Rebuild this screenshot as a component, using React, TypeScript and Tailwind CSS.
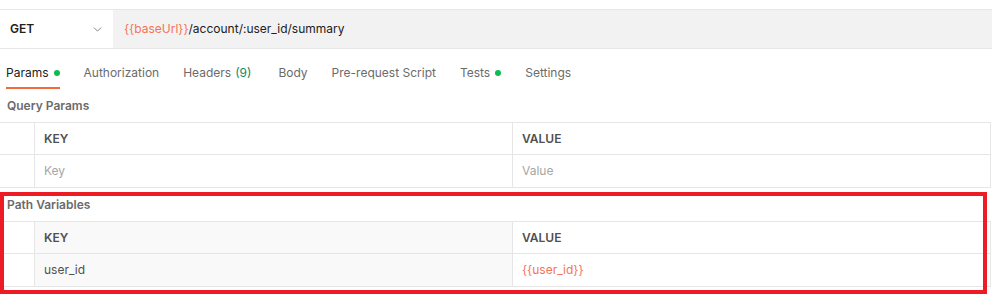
import { ChevronDown } from "lucide-react";

const tabs = [
  { label: "Params", dot: true, active: true },
  { label: "Authorization" },
  { label: "Headers", count: "(9)" },
  { label: "Body" },
  { label: "Pre-request Script" },
  { label: "Tests", dot: true },
  { label: "Settings" },
];

type Row = { key: string; value: string; placeholder?: boolean; variable?: boolean };

const ParamTable = ({ title, row, highlight }: { title: string; row: Row; highlight?: boolean }) => {
  const keyBg = highlight ? "bg-[#f9f9f9]" : "bg-white";
  return (
    <div>
      <div className="h-[33px] flex items-center pl-[7px] text-[12px] font-semibold text-[#6b6b6b]">
        {title}
      </div>
      <div className="border-t border-[#e6e6e6] w-[991px]">
        {/* header */}
        <div className="flex h-[32px] border-b border-[#e6e6e6]">
          <div className="w-[35px] border-r border-[#e6e6e6]" />
          <div className={`w-[478px] border-r border-[#e6e6e6] flex items-center pl-[9px] text-[12px] font-semibold text-[#505050] ${keyBg}`}>
            KEY
          </div>
          <div className="w-[478px] border-r border-[#e6e6e6] flex items-center pl-[9px] text-[12px] font-semibold text-[#505050]">
            VALUE
          </div>
        </div>
        {/* row */}
        <div className="flex h-[33px] border-b border-[#e6e6e6]">
          <div className="w-[35px] border-r border-[#e6e6e6]" />
          <div
            className={`w-[478px] border-r border-[#e6e6e6] flex items-center pl-[9px] text-[12px] ${keyBg} ${
              row.placeholder ? "text-[#a6a6a6]" : "text-[#505050]"
            }`}
          >
            {row.key}
          </div>
          <div
            className={`w-[478px] border-r border-[#e6e6e6] flex items-center pl-[9px] text-[12px] ${
              row.placeholder ? "text-[#a6a6a6]" : row.variable ? "text-[#f3735b]" : "text-[#505050]"
            }`}
          >
            {row.value}
          </div>
        </div>
      </div>
    </div>
  );
};

export default function App() {
  return (
    <div className="relative w-[992px] h-[302px] bg-white overflow-hidden font-['Inter',sans-serif]">
      {/* Request bar */}
      <div className="pt-[9px]">
        <div className="flex h-[40px] border-t border-b border-[#e6e6e6]">
          <div className="w-[113px] bg-white flex items-center justify-between pl-[10px] pr-[9px]">
            <span className="text-[12px] font-semibold text-[#212121]">GET</span>
            <ChevronDown className="w-[13px] h-[13px] text-[#6b6b6b]" strokeWidth={1.5} />
          </div>
          <div className="flex-1 bg-[#f2f2f2] flex items-center pl-[11px] text-[12px] text-[#212121]">
            <span className="text-[#f3735b]">{"{{baseUrl}}"}</span>
            <span>/account/:user_id/summary</span>
          </div>
        </div>
      </div>

      {/* Tabs */}
      <div className="flex gap-6 pl-[6px]">
        {tabs.map((tab, index) => (
          <div
            key={index}
            className={`pt-4 pb-[6px] border-b-2 flex items-center text-[12px] leading-4 ${
              tab.active ? "border-[#f26b3a] text-[#212121]" : "border-transparent text-[#6b6b6b]"
            }`}
          >
            <span>{tab.label}</span>
            {tab.count && <span className="ml-1 pr-[3px] text-[#0c8a5f]">{tab.count}</span>}
            {tab.dot && <span className="ml-[5px] w-[6px] h-[6px] rounded-full bg-[#0cbb52]" />}
          </div>
        ))}
      </div>

      <ParamTable title="Query Params" row={{ key: "Key", value: "Value", placeholder: true }} />
      <ParamTable title="Path Variables" row={{ key: "user_id", value: "{{user_id}}", variable: true }} highlight />

      {/* annotation overlay */}
      <div className="absolute left-0 top-[192px] w-[987px] h-[102px] border-4 border-[#ed1c24] pointer-events-none" />
    </div>
  );
}
